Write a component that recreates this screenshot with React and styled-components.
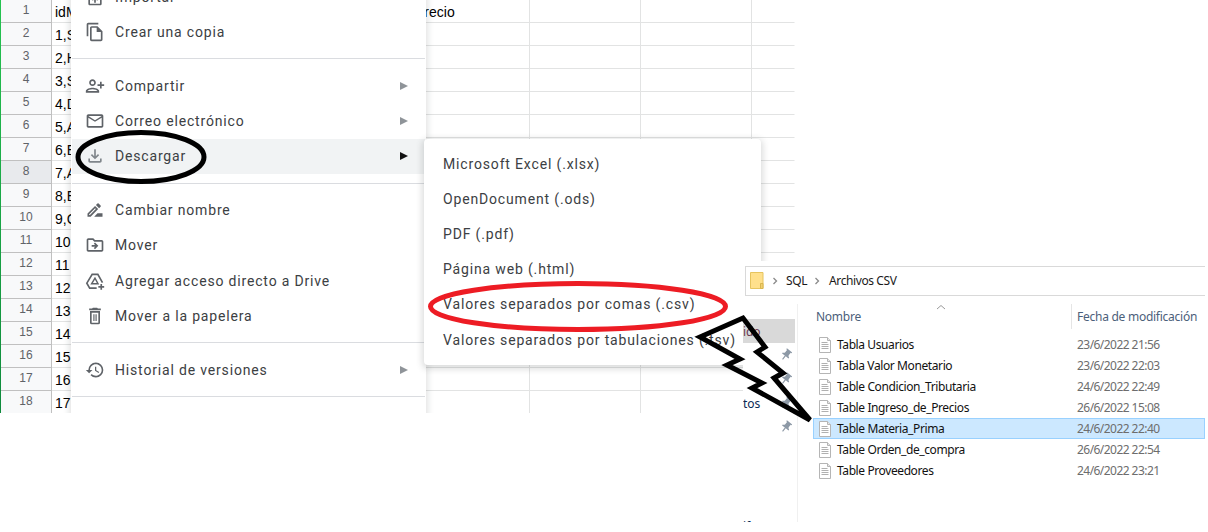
import React from "react";
import styled, { createGlobalStyle } from "styled-components";
import {
  MdOutlineFileCopy, MdPersonAddAlt, MdMailOutline, MdOutlineFileDownload,
  MdOutlineDriveFileRenameOutline, MdOutlineDriveFileMove,
  MdHistory, MdPushPin, MdOutlineUploadFile,
} from "react-icons/md";

const Global = createGlobalStyle`
  html, body { margin: 0; padding: 0; background: #fff; }
  #root { width: 1208px; height: 532px; overflow: hidden; }
`;

const Canvas = styled.div`
  position: relative;
  width: 1208px;
  height: 532px;
  background: #fff;
  overflow: hidden;
`;

/* ---------- spreadsheet ---------- */
const Sheet = styled.div`
  position: relative;
  width: 795px;
  height: 413px;
  overflow: hidden;
  border-left: 1px solid #18ab48;
  box-sizing: border-box;
  border-image: linear-gradient(#25c450, #0f8a3c) 1;
`;
const SheetRow = styled.div`
  display: grid;
  grid-template-columns: 51px 367px 111px 111px 111px 43px;
  height: 23px;
`;
const RowHead = styled.div`
  background: ${(p) => (p.$active ? "#e8eaed" : "#f8f9fa")};
  border-right: 1px solid #c0c0c0;
  border-bottom: 1px solid #c0c0c0;
  box-sizing: border-box;
  color: #5f6368;
  font: 12px/20px "Liberation Sans", sans-serif;
  text-align: center;
`;
const Cell = styled.div`
  border-right: 1px solid ${(p) => (p.$last ? "transparent" : "#e2e3e3")};
  border-bottom: 1px solid #e2e3e3;
  box-sizing: border-box;
  padding: 3px 0 0 3px;
  color: #000;
  font: 14px/18px "Liberation Sans", sans-serif;
  white-space: nowrap;
  overflow: hidden;
`;
const PrecioText = styled.span`
  position: absolute;
  left: 414px;
  top: 3px;
`;

/* ---------- google menu ---------- */
const Menu = styled.div`
  position: absolute;
  left: 70px;
  top: -21px;
  width: 355px;
  height: 450px;
  background: #fff;
  box-shadow: 0 2px 6px 2px rgba(60, 64, 67, 0.15);
`;
const Item = styled.div`
  display: flex;
  align-items: center;
  height: 35px;
  width: 353px;
  margin-left: 1px;
  box-sizing: border-box;
  padding-bottom: ${(p) => (p.$up ? 2 : 0)}px;
  background: ${(p) => (p.$hover ? "#f1f3f4" : "transparent")};
  color: #3c4043;
  font: 14px/20px Roboto, sans-serif;
  letter-spacing: 0.83px;
`;
const IconSlot = styled.span`
  display: flex;
  align-items: center;
  justify-content: center;
  width: 20px;
  height: 20px;
  margin: 0 10px 0 13px;
  color: ${(p) => p.$color || "#5f6368"};
  font-size: 20px;
`;
const ItemLabel = styled.span`
  flex: 1;
`;
const Arrow = styled.span`
  width: 0;
  height: 0;
  margin-right: 17px;
  border-left: 8px solid ${(p) => (p.$dark ? "#111" : "#8f9499")};
  border-top: 4px solid transparent;
  border-bottom: 4px solid transparent;
`;
const Divider = styled.div`
  height: ${(p) => p.$h || 19}px;
  width: 353px;
  margin-left: 1px;
  display: flex;
  align-items: flex-start;
  padding-top: 9px;
  box-sizing: border-box;
  &::before {
    content: "";
    flex: 1;
    height: 1px;
    background: #dadce0;
  }
`;

/* ---------- submenu ---------- */
const SubMenu = styled.div`
  position: absolute;
  left: 423px;
  top: 139px;
  width: 337px;
  padding: 8px 0 7px;
  background: #fff;
  border-radius: 4px;
  box-shadow: 0 2px 6px 2px rgba(60, 64, 67, 0.18);
`;
const SubItem = styled.div`
  height: 35px;
  padding-left: 19px;
  color: #3c4043;
  font: 14px/35px Roboto, sans-serif;
  letter-spacing: 0.84px;
  white-space: nowrap;
  &:last-child {
    margin-top: 1px;
  }
`;

/* ---------- windows explorer ---------- */
const Explorer = styled.div`
  position: absolute;
  left: 743px;
  top: 261px;
  width: 465px;
  height: 261px;
  background: #fff;
  overflow: hidden;
`;
const Breadcrumb = styled.div`
  display: flex;
  align-items: center;
  height: 30px;
  width: 460px;
  margin: 5px 0 0 2px;
  box-sizing: border-box;
  border: 1px solid #d9d9d9;
  border-right: none;
  padding: 0 0 1px 4px;
  font: 12px "Noto Sans", sans-serif;
  letter-spacing: -0.4px;
  color: #1a1a1a;
`;
const Chevron = styled.span`
  display: flex;
  margin: ${(p) => p.$m};
  color: #8a8a8a;
`;
const Body = styled.div`
  display: grid;
  grid-template-columns: 55px 1fr;
  height: 226px;
`;
const Nav = styled.div`
  border-right: 1px solid #f0f0f0;
  padding-top: 15px;
  box-sizing: border-box;
  height: 218px;
  margin-top: 8px;
  overflow: hidden;
  font: 12px "Noto Sans", sans-serif;
  letter-spacing: -0.1px;
`;
const NavRow = styled.div`
  display: flex;
  align-items: center;
  justify-content: space-between;
  width: 52px;
  height: 24px;
  margin-top: ${(p) => p.$gap || 0}px;
  background: ${(p) => (p.$sel ? "#d9d9d9" : "transparent")};
  overflow: hidden;
  white-space: nowrap;
  color: ${(p) => p.$color || "#0a2a55"};
`;
const Pin = styled(MdPushPin)`
  color: #8d99a6;
  font-size: 14px;
  transform: rotate(38deg);
  margin-left: auto;
  margin-right: 2px;
  flex: none;
`;
const List = styled.div`
  padding-left: 15px;
`;
const ListHead = styled.div`
  position: relative;
  display: grid;
  grid-template-columns: 255px 1fr;
  height: 30px;
  margin-top: 8px;
  padding-left: 3px;
  font: 12px/25px "Noto Sans", sans-serif;
  letter-spacing: -0.26px;
  color: #4c607a;
`;
const Sort = styled.svg`
  position: absolute;
  left: 122px;
  top: 0;
`;
const HeadCell = styled.div`
  ${(p) => p.$sep && `border-left: 1px solid #e5e5e5; padding-left: 5px; height: 25px;`}
`;
const FileRow = styled.div`
  display: grid;
  grid-template-columns: 18px 240px 1fr;
  align-items: center;
  height: 21px;
  width: 392px;
  box-sizing: border-box;
  padding-left: 5px;
  border: 1px solid ${(p) => (p.$sel ? "#99d1ff" : "transparent")};
  background: ${(p) => (p.$sel ? "#cce8ff" : "transparent")};
  font: 12px "Noto Sans", sans-serif;
  letter-spacing: -0.4px;
  color: #111;
  white-space: nowrap;
`;
const FileDate = styled.span`
  color: #6d6d6d;
  letter-spacing: -0.55px;
`;

const Annotations = styled.svg`
  position: absolute;
  left: 0;
  top: 0;
  pointer-events: none;
`;

const cellsLeft = ["idM","1,S","2,H","3,S","4,D","5,A","6,E","7,A","8,E","9,C","10","11","12","13","14","15","16","17"];

const DriveIcon = () => (
  <svg width="20" height="20" viewBox="0 0 24 24" fill="none" stroke="currentColor" strokeWidth="2">
    <path d="M21 14l-5.6-10H8.6L2.2 14.6 5.6 20.5H14" />
    <path d="M12 8.6l-4 6.6h7.6z" strokeWidth="1.8" />
    <path d="M19.5 15.5v7M16 19h7" />
  </svg>
);
const TrashIcon = () => (
  <svg width="20" height="20" viewBox="0 0 24 24" fill="currentColor">
    <path d="M15.5 3l-1-1h-5l-1 1H5v2h14V3z" />
    <path fillRule="evenodd" d="M6 6v14a2 2 0 0 0 2 2h8a2 2 0 0 0 2-2V6zm2 2h8v12H8z" />
    <path d="M10 10h1.4v8H10zM12.6 10H14v8h-1.4z" />
  </svg>
);

const menuA = [
  [MdOutlineUploadFile, "Importar"],
  [MdOutlineFileCopy, "Crear una copia"],
];
const menuB = [
  [MdPersonAddAlt, "Compartir"],
  [MdMailOutline, "Correo electrónico"],
];
const menuC = [
  [MdOutlineDriveFileRenameOutline, "Cambiar nombre", true],
  [MdOutlineDriveFileMove, "Mover", true],
  [DriveIcon, "Agregar acceso directo a Drive"],
  [TrashIcon, "Mover a la papelera"],
];
const subs = [
  "Microsoft Excel (.xlsx)",
  "OpenDocument (.ods)",
  "PDF (.pdf)",
  "Página web (.html)",
  "Valores separados por comas (.csv)",
  "Valores separados por tabulaciones (.tsv)",
];
const files = [
  ["Tabla Usuarios", "23/6/2022 21:56"],
  ["Tabla Valor Monetario", "23/6/2022 22:03"],
  ["Table Condicion_Tributaria", "24/6/2022 22:49"],
  ["Table Ingreso_de_Precios", "26/6/2022 15:08"],
  ["Table Materia_Prima", "24/6/2022 22:40", true],
  ["Table Orden_de_compra", "26/6/2022 22:54"],
  ["Table Proveedores", "24/6/2022 23:21"],
];

const MenuItem = ({ icon: Icon, label, sub, hover, color, up }) => (
  <Item $hover={hover} $up={up}>
    <IconSlot $color={color}><Icon /></IconSlot>
    <ItemLabel>{label}</ItemLabel>
    {sub && <Arrow $dark={hover} />}
  </Item>
);

const FileIcon = () => (
  <svg width="12" height="16" viewBox="0 0 12 16">
    <path d="M.5.5h8l3 3v12H.5z" fill="#fff" stroke="#b5b5b5" />
    <path d="M8.5.5v3h3" fill="#e8e8e8" stroke="#b5b5b5" />
    <path d="M2.5 5.5h6M2.5 7.5h7M2.5 9.5h7M2.5 11.5h7" stroke="#b0b0b0" />
  </svg>
);
const FolderIcon = () => (
  <svg width="14" height="17" viewBox="0 0 14 17">
    <path d="M.5.5h12.5v16H.5z" fill="#ffe08c" stroke="#e6c45f" />
    <path d="M10.5 16.5v-5h2.5v5z" fill="#f2cf6f" stroke="#d9b64f" />
  </svg>
);
const ChevronIcon = () => (
  <svg width="6" height="8" viewBox="0 0 6 8">
    <path d="M1.5 1l3 3-3 3" fill="none" stroke="currentColor" strokeWidth="1.3" />
  </svg>
);

export default function App() {
  return (
    <Canvas>
      <Global />
      <Sheet>
        {cellsLeft.map((t, i) => (
          <SheetRow key={i}>
            <RowHead $active={i === 7}>{i + 1}</RowHead>
            <Cell>
              {t}
              {i === 0 && <PrecioText>Precio</PrecioText>}
            </Cell>
            <Cell />
            <Cell />
            <Cell />
            <Cell $last />
          </SheetRow>
        ))}
        <Menu>
          {menuA.map(([I, l]) => <MenuItem key={l} icon={I} label={l} />)}
          <Divider $h={20} />
          {menuB.map(([I, l]) => <MenuItem key={l} icon={I} label={l} sub up />)}
          <MenuItem icon={MdOutlineFileDownload} label="Descargar" sub hover up color="#80868b" />
          <Divider />
          {menuC.map(([I, l, up]) => <MenuItem key={l} icon={I} label={l} up={up} />)}
          <Divider />
          <MenuItem icon={MdHistory} label="Historial de versiones" sub />
          <Divider />
        </Menu>
        <SubMenu>
          {subs.map((s) => <SubItem key={s}>{s}</SubItem>)}
        </SubMenu>
      </Sheet>

      <Explorer>
        <Breadcrumb>
          <FolderIcon />
          <Chevron $m="0 8px 0 8px"><ChevronIcon /></Chevron>
          <span>SQL</span>
          <Chevron $m="0 9px 0 7px"><ChevronIcon /></Chevron>
          <span>Archivos CSV</span>
        </Breadcrumb>
        <Body>
          <Nav>
            <NavRow $sel $color="#6a3a50">ido</NavRow>
            <NavRow><Pin /></NavRow>
            <NavRow><Pin /></NavRow>
            <NavRow>tos<Pin /></NavRow>
            <NavRow><Pin /></NavRow>
            <NavRow $gap={75}>if</NavRow>
          </Nav>
          <List>
            <ListHead>
              <Sort width="12" height="6" viewBox="0 0 12 6">
                <path d="M2 5l4-3.5L10 5" fill="none" stroke="#9a9a9a" />
              </Sort>
              <HeadCell>Nombre</HeadCell>
              <HeadCell $sep>Fecha de modificación</HeadCell>
            </ListHead>
            {files.map(([n, d, sel]) => (
              <FileRow key={n} $sel={sel}>
                <FileIcon />
                <span>{n}</span>
                <FileDate>{d}</FileDate>
              </FileRow>
            ))}
          </List>
        </Body>
      </Explorer>

      <Annotations width="1208" height="532" viewBox="0 0 1208 532">
        <ellipse cx="141" cy="157" rx="63" ry="24.5" fill="none" stroke="#000" strokeWidth="5" />
        <ellipse cx="578" cy="306.5" rx="147.5" ry="23" fill="none" stroke="#ed1c24" strokeWidth="5" />
        <polygon
          points="700,337 743,318 765,347 757,352 783,373 774,378 810,420 752,388 762,383 727,365 740,359"
          fill="none"
          stroke="#000"
          strokeWidth="5"
        />
      </Annotations>
    </Canvas>
  );
}
